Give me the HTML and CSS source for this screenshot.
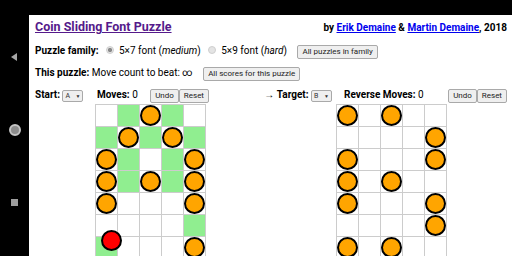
FILE: index.html
```html
<!DOCTYPE html>
<html>
  <head>
    <meta charset="UTF-8">
    <title>Coin Sliding Font Puzzle</title>
    <link rel="stylesheet" href="styles.css">
  </head>
  <body>
    <div class="device">
      <nav class="sysnav">
        <span class="nav-back"></span>
        <span class="nav-home"></span>
        <span class="nav-recent"></span>
      </nav>
      <div class="screen">
        <div class="statusbar"></div>
        <div class="page">
          <div class="title-row">
            <a class="title" href="#">Coin Sliding Font Puzzle</a>
            <span class="byline">by <a href="#">Erik Demaine</a> &amp; <a href="#">Martin Demaine</a>, 2018</span>
          </div>
          <div class="row">
            <b>Puzzle family:</b>
            <label><input type="radio" name="family" checked>5×7 font (<i>medium</i>)</label>
            <label><input type="radio" name="family">5×9 font (<i>hard</i>)</label>
            <button class="wide">All puzzles in family</button>
          </div>
          <div class="row">
            <b>This puzzle:</b> Move count to beat: ∞
            <button class="wide">All scores for this puzzle</button>
          </div>
          <div class="boards">
            <div class="side side-start">
              <b>Start:</b> <span class="pick"><span>A</span><span class="arrow">▼</span></span>
            </div>
            <div class="board board-left">
              <div class="board-head">
                <span><b>Moves:</b> 0</span>
                <span class="pair"><button>Undo</button><button>Reset</button></span>
              </div>
              <div class="grid">
                <span class="cell"></span><span class="cell g"></span><span class="cell c"></span><span class="cell g"></span><span class="cell"></span>
                <span class="cell g"></span><span class="cell c"></span><span class="cell g"></span><span class="cell c"></span><span class="cell g"></span>
                <span class="cell c"></span><span class="cell g"></span><span class="cell"></span><span class="cell g"></span><span class="cell c"></span>
                <span class="cell c"></span><span class="cell g"></span><span class="cell c"></span><span class="cell g"></span><span class="cell c"></span>
                <span class="cell c"></span><span class="cell"></span><span class="cell"></span><span class="cell"></span><span class="cell c"></span>
                <span class="cell"></span><span class="cell"></span><span class="cell"></span><span class="cell"></span><span class="cell g"></span>
                <span class="cell g"><span class="red-coin"></span></span><span class="cell"></span><span class="cell"></span><span class="cell"></span><span class="cell c"></span>
              </div>
            </div>
            <div class="side side-target">
              → <b>Target:</b> <span class="pick"><span>B</span><span class="arrow">▼</span></span>
            </div>
            <div class="board board-right">
              <div class="board-head">
                <span><b>Reverse Moves:</b> 0</span>
                <span class="pair"><button>Undo</button><button>Reset</button></span>
              </div>
              <div class="grid">
                <span class="cell c"></span><span class="cell"></span><span class="cell c"></span><span class="cell"></span><span class="cell"></span>
                <span class="cell"></span><span class="cell"></span><span class="cell"></span><span class="cell"></span><span class="cell c"></span>
                <span class="cell c"></span><span class="cell"></span><span class="cell"></span><span class="cell"></span><span class="cell c"></span>
                <span class="cell c"></span><span class="cell"></span><span class="cell c"></span><span class="cell"></span><span class="cell"></span>
                <span class="cell c"></span><span class="cell"></span><span class="cell"></span><span class="cell"></span><span class="cell c"></span>
                <span class="cell"></span><span class="cell"></span><span class="cell"></span><span class="cell"></span><span class="cell c"></span>
                <span class="cell c"></span><span class="cell"></span><span class="cell c"></span><span class="cell"></span><span class="cell"></span>
              </div>
            </div>
          </div>
        </div>
      </div>
    </div>
  </body>
</html>
```

FILE: styles.css
```css
body {
  margin: 0;
  background: #000;
}
.device {
  display: grid;
  grid-template-columns: 29px 1fr;
  height: 256px;
  overflow: hidden;
}
.sysnav {
  display: flex;
  flex-direction: column;
  justify-content: space-between;
  align-items: center;
  padding: 53px 0;
}
.nav-back {
  width: 0;
  height: 0;
  border-right: 6px solid #a6a6a6;
  border-top: 4px solid transparent;
  border-bottom: 4px solid transparent;
  margin-left: -1px;
}
.nav-home {
  width: 8px;
  height: 8px;
  border: 2px solid #c4c4c4;
  border-radius: 50%;
  background: #8c8c8c;
  margin-left: 1px;
}
.nav-recent {
  width: 7px;
  height: 7px;
  background: #9e9e9e;
}
.screen {
  display: flex;
  flex-direction: column;
  min-width: 0;
}
.statusbar {
  height: 15px;
  flex: none;
}
.page {
  flex: 1;
  background: #fff;
  padding: 0 5px 0 6px;
  font-family: Roboto, "Liberation Sans", sans-serif;
  font-size: 10px;
  color: #000;
  overflow: hidden;
}
.title-row {
  display: flex;
  justify-content: space-between;
  align-items: baseline;
  line-height: 24px;
}
.title {
  font-size: 12.5px;
  font-weight: bold;
  color: #551a8b;
}
.byline {
  font-weight: bold;
}
.byline a {
  color: #00e;
}
.row {
  line-height: 22px;
  white-space: nowrap;
}
input[type="radio"] {
  appearance: none;
  -webkit-appearance: none;
  width: 8px;
  height: 8px;
  margin: 0 5px 0 5px;
  border: 1px solid #cfcfcf;
  border-radius: 50%;
  background: #e4e4e4;
  box-sizing: border-box;
  vertical-align: baseline;
}
input[type="radio"]:checked {
  background: radial-gradient(circle, #8a8a8a 0 1.8px, #e4e4e4 2.4px);
}
button {
  font: 8px/12px Roboto, "Liberation Sans", sans-serif;
  color: #222;
  background: #efefef;
  border: 1px solid #a9a9a9;
  border-radius: 2px;
  padding: 0 4px;
  margin: 0;
}
.wide {
  margin-left: 8px;
}
.boards {
  display: flex;
  align-items: flex-start;
}
.side {
  line-height: 19px;
  padding-top: 1px;
  white-space: nowrap;
}
.side-start {
  width: 60px;
}
.side-target {
  width: 127px;
  text-align: right;
  padding-right: 4px;
  box-sizing: border-box;
}
.pick {
  display: inline-flex;
  justify-content: space-between;
  width: 21px;
  height: 12px;
  box-sizing: border-box;
  border: 1px solid #a9a9a9;
  border-radius: 2px;
  background: #efefef;
  font-size: 7px;
  line-height: 10px;
  padding: 0 2px;
  color: #333;
  text-align: left;
}
.pick .arrow {
  font-size: 5px;
}
.board-head {
  display: flex;
  justify-content: space-between;
  align-items: baseline;
  line-height: 19px;
  padding-top: 1px;
  white-space: nowrap;
}
.board-left {
  width: 114px;
}
.board-left .board-head {
  padding-left: 2px;
}
.board-right {
  width: 171px;
}
.board-right .board-head {
  padding-left: 8px;
}
.grid {
  display: grid;
  grid-template-columns: repeat(5, 21px);
  grid-auto-rows: 21px;
  gap: 1px;
  width: max-content;
  background: #ccc;
  border: 1px solid #ccc;
}
.cell {
  position: relative;
  background: #fff;
}
.cell.g {
  background: #90ee90;
}
.cell.c::after {
  content: "";
  display: block;
  width: 17px;
  height: 17px;
  border: 2px solid #000;
  border-radius: 50%;
  background: #ffa500;
}
.red-coin {
  position: absolute;
  left: 5px;
  top: -7px;
  z-index: 1;
  width: 17px;
  height: 17px;
  border: 2px solid #000;
  border-radius: 50%;
  background: #f00;
}
```
